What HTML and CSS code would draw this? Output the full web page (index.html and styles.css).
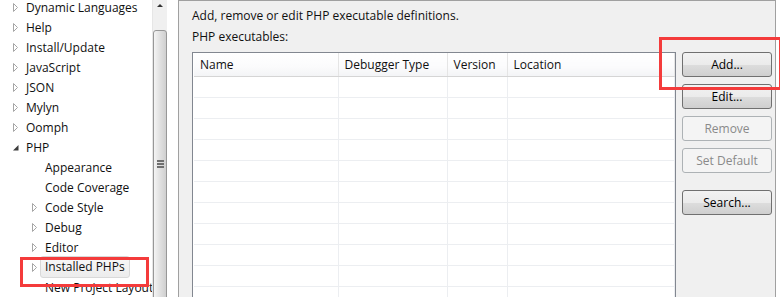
FILE: index.html
```html
<!DOCTYPE html>
<html lang="en">
<head>
  <meta charset="UTF-8">
  <title>Installed PHPs</title>
  <link rel="stylesheet" href="styles.css">
</head>
<body>
  <div class="window">
    <div class="tree">
      <ul class="nodes">
        <li class="node"><span class="twist"></span><span class="label">Dynamic Languages</span></li>
        <li class="node"><span class="twist"></span><span class="label">Help</span></li>
        <li class="node"><span class="twist"></span><span class="label">Install/Update</span></li>
        <li class="node"><span class="twist"></span><span class="label">JavaScript</span></li>
        <li class="node"><span class="twist"></span><span class="label">JSON</span></li>
        <li class="node"><span class="twist"></span><span class="label">Mylyn</span></li>
        <li class="node"><span class="twist"></span><span class="label">Oomph</span></li>
        <li class="node"><span class="twist open"></span><span class="label">PHP</span></li>
        <li class="node child"><span class="twist none"></span><span class="label">Appearance</span></li>
        <li class="node child"><span class="twist none"></span><span class="label">Code Coverage</span></li>
        <li class="node child"><span class="twist"></span><span class="label">Code Style</span></li>
        <li class="node child"><span class="twist"></span><span class="label">Debug</span></li>
        <li class="node child"><span class="twist"></span><span class="label">Editor</span></li>
        <li class="node child marked"><span class="twist"></span><span class="label selected">Installed PHPs</span></li>
        <li class="node child"><span class="twist none"></span><span class="label">New Project Layout</span></li>
      </ul>
    </div>

    <div class="scrollbar">
      <div class="arrow-up"></div>
      <div class="thumb"><span class="grip"></span></div>
    </div>

    <div class="spacer"></div>

    <div class="page">
      <p class="intro">Add, remove or edit PHP executable definitions.</p>
      <p class="caption">PHP executables:</p>

      <div class="content">
        <div class="grid">
          <table>
            <thead>
              <tr>
                <th class="c-name">Name</th>
                <th class="c-debug">Debugger Type</th>
                <th class="c-version">Version</th>
                <th class="c-location">Location</th>
              </tr>
            </thead>
            <tbody>
              <tr><td></td><td></td><td></td><td></td></tr>
              <tr><td></td><td></td><td></td><td></td></tr>
              <tr><td></td><td></td><td></td><td></td></tr>
              <tr><td></td><td></td><td></td><td></td></tr>
              <tr><td></td><td></td><td></td><td></td></tr>
              <tr><td></td><td></td><td></td><td></td></tr>
              <tr><td></td><td></td><td></td><td></td></tr>
              <tr><td></td><td></td><td></td><td></td></tr>
              <tr><td></td><td></td><td></td><td></td></tr>
              <tr><td></td><td></td><td></td><td></td></tr>
              <tr><td></td><td></td><td></td><td></td></tr>
            </tbody>
          </table>
        </div>

        <div class="buttons">
          <button class="btn marked-btn">Add...</button>
          <button class="btn">Edit...</button>
          <button class="btn" disabled>Remove</button>
          <button class="btn" disabled>Set Default</button>
          <button class="btn search">Search...</button>
        </div>
      </div>
    </div>

    <div class="edge"></div>
  </div>
</body>
</html>
```

FILE: styles.css
```css
* {
  box-sizing: border-box;
}
body {
  margin: 0;
  font-family: "Open Sans", "Noto Sans", sans-serif;
  font-size: 12px;
  color: #101010;
  background: #fff;
}
.window {
  display: flex;
  width: 780px;
  height: 297px;
  overflow: hidden;
}

/* tree */
.tree {
  width: 152px;
  overflow: hidden;
  background: #fff;
}
.nodes {
  list-style: none;
  margin: -3px 0 0;
  padding: 0;
}
.node {
  display: flex;
  align-items: center;
  height: 20px;
  padding-left: 13px;
  white-space: nowrap;
}
.node.child {
  padding-left: 32px;
}
.twist {
  width: 6px;
  height: 9px;
  margin-right: 6px;
  flex: none;
  background: url("data:image/svg+xml,%3Csvg xmlns='http://www.w3.org/2000/svg' width='6' height='9'%3E%3Cpath d='M0.5 0.5 L4.5 4.5 L0.5 8.5 Z' fill='%23fff' stroke='%23a6a6a6'/%3E%3C/svg%3E") no-repeat;
}
.twist.open {
  background: url("data:image/svg+xml,%3Csvg xmlns='http://www.w3.org/2000/svg' width='6' height='9'%3E%3Cpath d='M5.5 2 L5.5 7.5 L0 7.5 Z' fill='%233c3c3c'/%3E%3C/svg%3E") no-repeat;
}
.twist.none {
  background: none;
}
.label {
  padding: 0 1px;
}
.label.selected {
  margin-left: -4px;
  padding: 1px 4px 2px;
  border: 1px solid #d9d9d9;
  border-radius: 3px;
  background: linear-gradient(#f8f8f8, #ececec);
}
.node.marked {
  position: relative;
}
.node.marked::after {
  content: "";
  position: absolute;
  left: 20px;
  top: 0;
  width: 123px;
  height: 24px;
  border: 3px solid #f43b3b;
}

/* scrollbar */
.scrollbar {
  position: relative;
  width: 15px;
  background: #f0f0f0;
  border-left: 1px solid #e6e6e6;
}
.arrow-up {
  height: 30px;
  position: relative;
}
.arrow-up::before {
  content: "";
  position: absolute;
  left: 4px;
  top: 4px;
  border-left: 3px solid transparent;
  border-right: 3px solid transparent;
  border-bottom: 3px solid #333;
}
.thumb {
  height: 300px;
  border: 1px solid #979797;
  border-radius: 3px;
  background: linear-gradient(to right, #f4f4f4, #e2e2e2 45%, #cfcfcf);
  position: relative;
}
.grip {
  position: absolute;
  left: 3px;
  top: 129px;
  width: 7px;
  height: 8px;
  border-top: 2px solid #6f6f6f;
  border-bottom: 2px solid #6f6f6f;
}
.grip::before {
  content: "";
  position: absolute;
  left: 0;
  top: 1px;
  width: 7px;
  border-top: 2px solid #6f6f6f;
}
.spacer {
  width: 11px;
  background: #fff;
}
.edge {
  width: 4px;
  background: #fff;
}

/* page */
.page {
  flex: 1;
  background: #f0f0f0;
  border-left: 1px solid #a0a0a0;
  border-right: 1px solid #a0a0a0;
  border-top: 1px solid #a0a0a0;
  padding: 7px 0 0 13px;
}
.intro,
.caption {
  margin: 0;
  line-height: 16px;
}
.caption {
  margin-top: 5px;
}
.content {
  display: flex;
  margin-top: 7px;
}
.grid {
  width: 484px;
  height: 260px;
  border-left: 1px solid #828790;
  border-top: 1px solid #828790;
  border-right: 1px solid #828790;
  background: #fff;
  padding: 0 2px 0 1px;
  overflow: hidden;
}
table {
  width: 480px;
  border-collapse: collapse;
  table-layout: fixed;
}
th {
  height: 23px;
  padding: 0 0 0 6px;
  text-align: left;
  font-weight: normal;
  background: linear-gradient(#fff, #fbfbfc 60%, #f3f4f6);
  border-right: 1px solid #e5e5e5;
  border-bottom: 1px solid #d5d5d5;
}
.c-name { width: 144px; }
.c-debug { width: 109px; }
.c-version { width: 60px; }
.c-location { width: 167px; }
td {
  height: 21px;
  border-right: 1px solid #eceef1;
  border-bottom: 1px solid #eceef1;
}

/* buttons */
.buttons {
  display: flex;
  flex-direction: column;
  gap: 7px;
  margin-left: 6px;
}
.btn {
  width: 90px;
  height: 25px;
  padding: 0;
  font-family: inherit;
  font-size: 12px;
  color: #000;
  border: 1px solid #707070;
  border-radius: 3px;
  background: linear-gradient(#f2f2f2, #ebebeb 50%, #dddddd 51%, #cfcfcf);
}
.btn:disabled {
  color: #8a8a8a;
  border-color: #adb2b5;
  background: #f4f4f4;
}
.btn.search {
  margin-top: 10px;
}
.marked-btn {
  position: relative;
  overflow: visible;
}
.marked-btn::after {
  content: "";
  position: absolute;
  left: -24px;
  top: -16px;
  width: 117px;
  height: 47px;
  border: 3px solid #f43b3b;
}
```
